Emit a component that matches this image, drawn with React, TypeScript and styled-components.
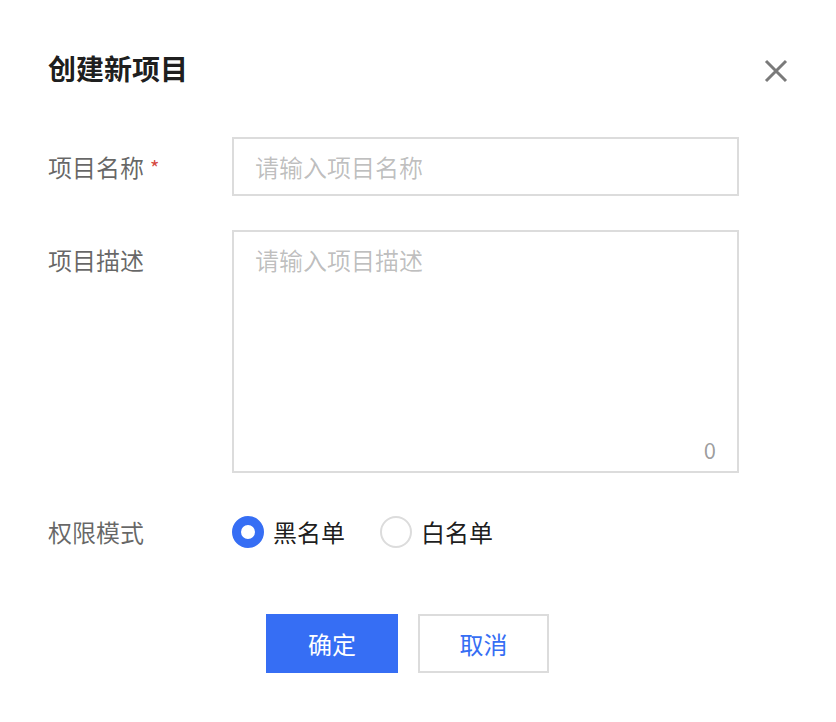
import React, { useState } from "react";
import styled, { createGlobalStyle } from "styled-components";

const Global = createGlobalStyle`
  html, body { margin: 0; padding: 0; background: #fff; }
  body { font-family: "Noto Sans CJK SC", "Noto Sans", sans-serif; }
  * { box-sizing: border-box; }
`;

const Dialog = styled.div`
  width: 836px;
  height: 722px;
  background: #fff;
  padding: 48px 47px 0 48px;
  display: flex;
  flex-direction: column;
`;

const Header = styled.div`
  display: flex;
  justify-content: space-between;
  align-items: center;
  height: 40px;
`;

const Title = styled.h1`
  margin: 0;
  font-size: 28px;
  line-height: 40px;
  font-weight: 700;
  color: rgba(0, 0, 0, 0.9);
`;

const CloseButton = styled.button`
  border: 0;
  background: none;
  padding: 0;
  margin: 6px 1px 0 0;
  width: 24px;
  height: 24px;
  display: flex;
  cursor: pointer;
`;

const Form = styled.div`
  margin-top: 48px;
  display: flex;
  flex-direction: column;
`;

const Row = styled.div<{ $center?: boolean; $gap: number }>`
  display: flex;
  margin-top: ${(p) => p.$gap}px;
  align-items: ${(p) => (p.$center ? "center" : "flex-start")};
`;

const Label = styled.label`
  width: 184px;
  flex: none;
  font-size: 24px;
  line-height: 59px;
  color: rgba(0, 0, 0, 0.6);
  display: flex;
  align-items: center;
`;

const Required = styled.span`
  color: #d54941;
  font-size: 20px;
  margin-left: 6px;
  margin-top: 2px;
`;

const Input = styled.input`
  width: 507px;
  height: 59px;
  border: 2px solid #dcdcdc;
  padding: 0 21px;
  font-family: inherit;
  font-size: 24px;
  color: rgba(0, 0, 0, 0.9);
  outline: none;
  &::placeholder { color: rgba(0, 0, 0, 0.26); }
`;

const AreaWrap = styled.div`
  position: relative;
  width: 507px;
  height: 243px;
`;

const TextArea = styled.textarea`
  width: 100%;
  height: 100%;
  border: 2px solid #dcdcdc;
  padding: 11px 21px;
  font-family: inherit;
  font-size: 24px;
  line-height: 34px;
  resize: none;
  outline: none;
  color: rgba(0, 0, 0, 0.9);
  &::placeholder { color: rgba(0, 0, 0, 0.26); }
`;

const Counter = styled.span`
  position: absolute;
  right: 23px;
  bottom: 9px;
  font-size: 22px;
  line-height: 30px;
  color: rgba(0, 0, 0, 0.4);
`;

const RadioGroup = styled.div`
  display: flex;
  align-items: center;
  gap: 35px;
  height: 59px;
`;

const RadioItem = styled.label`
  display: flex;
  align-items: center;
  gap: 9px;
  cursor: pointer;
  font-size: 24px;
  color: rgba(0, 0, 0, 0.9);
`;

const RadioCircle = styled.span<{ $checked: boolean }>`
  width: 32px;
  height: 32px;
  border-radius: 50%;
  flex: none;
  border: ${(p) => (p.$checked ? "9px solid #366ef4" : "2px solid #dcdcdc")};
  background: #fff;
`;

const Footer = styled.div`
  margin-top: 53px;
  padding-left: 218px;
  display: flex;
  gap: 20px;
`;

const Button = styled.button<{ $primary?: boolean }>`
  width: ${(p) => (p.$primary ? "132px" : "131px")};
  height: 59px;
  font-family: inherit;
  font-size: 24px;
  cursor: pointer;
  border: 2px solid ${(p) => (p.$primary ? "#366ef4" : "#dcdcdc")};
  background: ${(p) => (p.$primary ? "#366ef4" : "#fff")};
  color: ${(p) => (p.$primary ? "#fff" : "#366ef4")};
`;

export default function App() {
  const [mode, setMode] = useState("black");
  const [desc, setDesc] = useState("");
  return (
    <>
      <Global />
      <Dialog>
        <Header>
          <Title>创建新项目</Title>
          <CloseButton aria-label="关闭">
            <svg width="24" height="24" viewBox="0 0 24 24">
              <path d="M2 2 L22 22 M22 2 L2 22" stroke="#7a7a7a" strokeWidth="3" strokeLinecap="butt" fill="none" />
            </svg>
          </CloseButton>
        </Header>
        <Form>
          <Row $center $gap={0}>
            <Label>
              项目名称<Required>*</Required>
            </Label>
            <Input placeholder="请输入项目名称" />
          </Row>
          <Row $gap={33}>
            <Label>项目描述</Label>
            <AreaWrap>
              <TextArea
                placeholder="请输入项目描述"
                value={desc}
                onChange={(e) => setDesc(e.target.value)}
              />
              <Counter>{desc.length}</Counter>
            </AreaWrap>
          </Row>
          <Row $center $gap={29}>
            <Label>权限模式</Label>
            <RadioGroup>
              <RadioItem onClick={() => setMode("black")}>
                <RadioCircle $checked={mode === "black"} />
                黑名单
              </RadioItem>
              <RadioItem onClick={() => setMode("white")}>
                <RadioCircle $checked={mode === "white"} />
                白名单
              </RadioItem>
            </RadioGroup>
          </Row>
        </Form>
        <Footer>
          <Button $primary>确定</Button>
          <Button>取消</Button>
        </Footer>
      </Dialog>
    </>
  );
}
